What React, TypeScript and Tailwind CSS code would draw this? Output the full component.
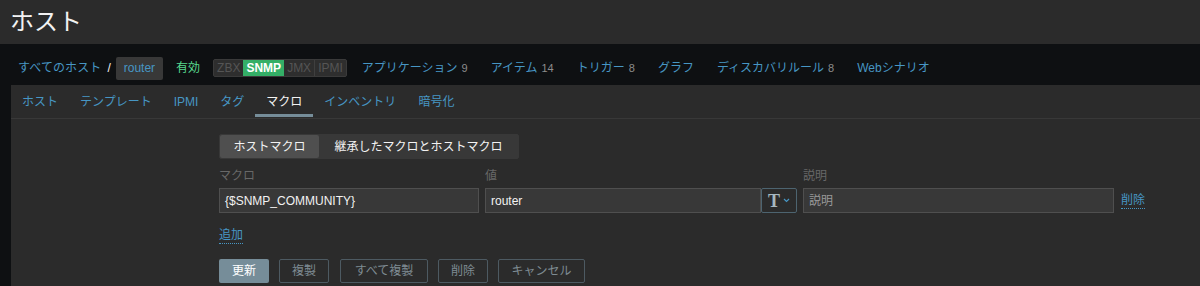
import React from "react";

const font = { fontFamily: '"Liberation Sans", Arial, "Noto Sans CJK JP", sans-serif' };

function NavItem({ label, count }: { label: string; count?: string }) {
  return (
    <span className="flex items-baseline whitespace-nowrap">
      <span className="text-[#4796c4] text-[12px]">{label}</span>
      {count && <span className="ml-[4px] text-[#8c8c8c] text-[11px]">{count}</span>}
    </span>
  );
}

function Tab({ label, active }: { label: string; active?: boolean }) {
  return (
    <div className="relative h-full flex items-center px-[11px]">
      <span className={active ? "text-[#f2f2f2] text-[12px]" : "text-[#4796c4] text-[12px]"}>{label}</span>
      {active && <div className="absolute left-0 right-0 bottom-[1px] h-[3px] bg-[#768d99]" />}
    </div>
  );
}

function AltButton({ label, w }: { label: string; w: string }) {
  return (
    <div className={`h-[24px] ${w} flex items-center justify-center rounded-[2px] border border-[#4d5a62] text-[#7f8c93] text-[12px]`}>
      {label}
    </div>
  );
}

export default function App() {
  return (
    <div style={font} className="w-[1200px] h-[286px] overflow-hidden bg-[#0e1012]">
      <div className="h-[44px] bg-[#2b2b2b] flex items-center pl-[10px]">
        <span className="text-[#f2f2f2] text-[24px] leading-none">ホスト</span>
      </div>
      <div className="pt-[12px] pb-[5px] pl-[18px] h-[41px] flex items-center">
        <span className="text-[#4796c4] text-[12px] tracking-[0.1px]">すべてのホスト</span>
        <span className="ml-[6px] text-[#f2f2f2] text-[12px]">/</span>
        <span className="ml-[5px] h-[23px] px-[8px] flex items-center rounded-[2px] bg-[#383838] text-[#4796c4] text-[12px]">router</span>
        <span className="ml-[13px] text-[#59db8f] text-[12px]">有効</span>
        <div className="ml-[13px] h-[18px] flex items-stretch rounded-[2px] bg-[#2e2e2e] border border-[#3a3a3a] text-[12px] leading-none">
          <span className="px-[3px] flex items-center text-[#555555]">ZBX</span>
          <span className="px-[3px] flex items-center bg-[#34af67] text-white font-bold">SNMP</span>
          <span className="px-[3px] flex items-center text-[#555555] border-r border-[#3f3f3f]">JMX</span>
          <span className="px-[3px] flex items-center text-[#555555]">IPMI</span>
        </div>
        <div className="ml-[15px] flex items-center gap-[23px]">
          <NavItem label="アプリケーション" count="9" />
          <NavItem label="アイテム" count="14" />
          <NavItem label="トリガー" count="8" />
          <NavItem label="グラフ" />
          <NavItem label="ディスカバリルール" count="8" />
          <NavItem label="Webシナリオ" />
        </div>
      </div>
      <div className="ml-[11px] bg-[#2b2b2b] h-[201px]">
        <div className="h-[34px] flex items-stretch border-b border-[#383838]">
          <Tab label="ホスト" />
          <Tab label="テンプレート" />
          <Tab label="IPMI" />
          <Tab label="タグ" />
          <Tab label="マクロ" active />
          <Tab label="インベントリ" />
          <Tab label="暗号化" />
        </div>
        <div className="pl-[208px] pt-[15px]">
          <div className="flex h-[25px] w-[300px] rounded-[2px] border border-[#383838] bg-[#383838] text-[12px] text-[#f2f2f2]">
            <div className="w-[99px] flex items-center justify-center bg-[#4f4f4f] rounded-[2px]">ホストマクロ</div>
            <div className="flex-1 flex items-center justify-center">継承したマクロとホストマクロ</div>
          </div>
          <div className="mt-[8px] h-[18px] flex items-center text-[12px] text-[#686868]">
            <span className="w-[266px]">マクロ</span>
            <span className="w-[318px]">値</span>
            <span>説明</span>
          </div>
          <div className="mt-[3px] flex items-center">
            <div className="w-[260px] h-[25px] flex items-center px-[5px] bg-[#383838] border border-[#4f4f4f] text-[12px] text-[#f2f2f2]">
              {"{$SNMP_COMMUNITY}"}
            </div>
            <div className="ml-[6px] w-[276px] h-[25px] flex items-center px-[5px] bg-[#383838] border border-[#4f4f4f] text-[12px] text-[#f2f2f2]">
              router
            </div>
            <div className="w-[36px] h-[25px] flex items-center justify-center gap-[3px] bg-[#2b2b2b] border border-[#4d6470] rounded-[2px]">
              <span style={{ fontFamily: '"Liberation Serif", serif' }} className="text-[#a7b7bf] text-[18px] font-bold leading-none">T</span>
              <svg width="7" height="5" viewBox="0 0 7 5"><path d="M1 1l2.5 2.5L6 1" stroke="#4796c4" strokeWidth="1.2" fill="none" /></svg>
            </div>
            <div className="ml-[6px] w-[311px] h-[25px] flex items-center px-[5px] bg-[#383838] border border-[#4f4f4f] text-[12px] text-[#9a9a9a]">
              説明
            </div>
            <span className="ml-[7px] text-[12px] text-[#4796c4] border-b border-dotted border-[#4796c4] leading-[15px]">削除</span>
          </div>
          <div className="mt-[14px] h-[18px] flex items-center">
            <span className="text-[12px] text-[#4796c4] border-b border-dotted border-[#4796c4] leading-[15px]">追加</span>
          </div>
          <div className="mt-[14px] flex items-center gap-[10px]">
            <div className="h-[24px] w-[50px] flex items-center justify-center rounded-[2px] bg-[#768d99] text-white text-[12px]">更新</div>
            <AltButton label="複製" w="w-[50px]" />
            <div className="ml-[1px]"><AltButton label="すべて複製" w="w-[88px]" /></div>
            <AltButton label="削除" w="w-[50px]" />
            <AltButton label="キャンセル" w="w-[87px]" />
          </div>
        </div>
      </div>
    </div>
  );
}
